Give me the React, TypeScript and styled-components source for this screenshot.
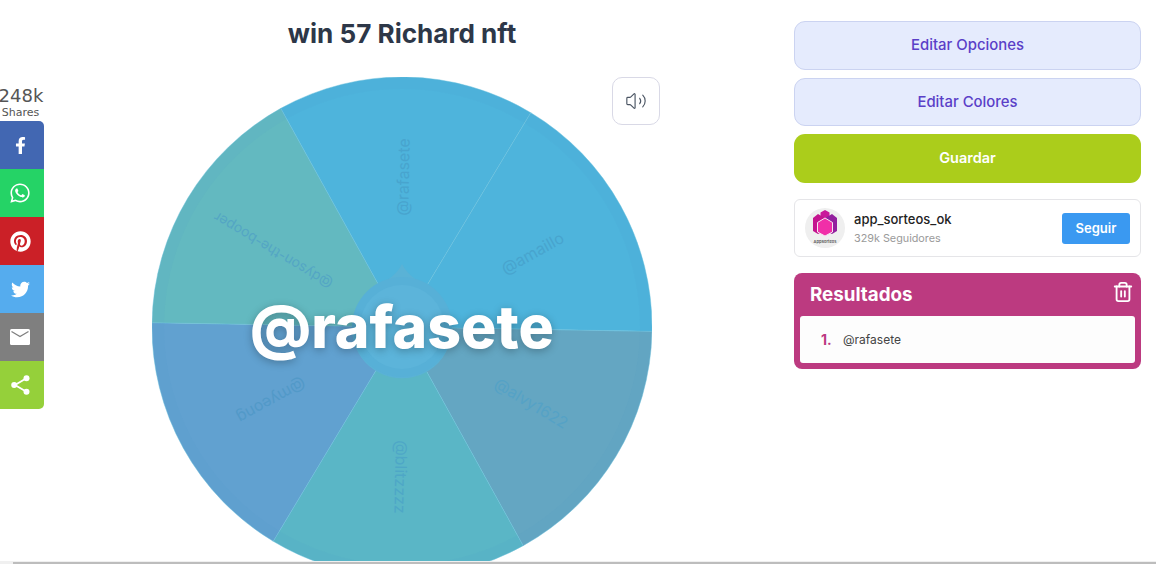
import React from "react";
import styled, { createGlobalStyle } from "styled-components";
import { FaFacebookF, FaWhatsapp, FaPinterest, FaTwitter } from "react-icons/fa";
import { Volume2, Trash2 } from "lucide-react";

const Global = createGlobalStyle`
  html, body { margin: 0; padding: 0; height: 100%; overflow: hidden; background: #fff; }
  body { font-family: Inter, "Liberation Sans", sans-serif; }
`;

const Page = styled.div`
  display: flex;
  align-items: flex-start;
  width: 1156px;
  height: 564px;
  overflow: hidden;
`;
const Main = styled.main`
  width: 780px;
  margin-left: 12px;
  display: flex;
  flex-direction: column;
  align-items: center;
`;
const Title = styled.h1`
  margin: 18px 0 0;
  height: 59px;
  font-size: 26.1px;
  line-height: 32px;
  font-weight: 700;
  color: #2d3748;
`;
const WheelBox = styled.div`
  position: relative;
  width: 500px;
  height: 500px;
  flex: none;
`;
const WheelSvg = styled.svg`
  display: block;
`;
const SoundButton = styled.button`
  position: absolute;
  top: 0;
  left: 460px;
  width: 48px;
  height: 48px;
  display: flex;
  align-items: center;
  justify-content: center;
  padding: 0;
  background: #fff;
  border: 1px solid #d9d9e6;
  border-radius: 10px;
  color: #4b5563;
`;
const Winner = styled.div`
  position: absolute;
  top: 214px;
  left: 0;
  width: 500px;
  text-align: center;
  font-size: 59px;
  line-height: 72px;
  font-weight: 800;
  color: #fff;
  text-shadow: 0 2px 8px rgba(0, 0, 0, 0.28);
`;
const Aside = styled.aside`
  width: 347px;
  margin-left: 2px;
  padding-top: 21px;
  display: flex;
  flex-direction: column;
`;
const OptionButton = styled.button<{ $h: number; $lift: number }>`
  height: ${(p) => p.$h}px;
  margin-bottom: 8px;
  padding: 0 0 ${(p) => p.$lift}px;
  background: #e5ebfd;
  border: 1px solid #cbd3f1;
  border-radius: 11px;
  color: #5a3fc8;
  font: 500 14.9px Inter, sans-serif;
`;
const SaveButton = styled.button`
  height: 49px;
  padding: 0 0 2px;
  background: #abcd1b;
  border: 0;
  border-radius: 11px;
  color: #fff;
  font: 600 14.5px Inter, sans-serif;
`;
const FollowCard = styled.div`
  margin-top: 16px;
  height: 58px;
  box-sizing: border-box;
  display: flex;
  align-items: center;
  padding: 0 10px;
  border: 1px solid #e5e5e8;
  border-radius: 6px;
`;
const Avatar = styled.div`
  position: relative;
  width: 40px;
  height: 40px;
  border-radius: 50%;
  background: #efefef;
  display: flex;
  flex-direction: column;
  align-items: center;
  flex: none;
`;
const AvatarLabel = styled.span`
  position: absolute;
  bottom: 4px;
  font-size: 4px;
  line-height: 5px;
  font-weight: 600;
  color: #555;
  white-space: nowrap;
`;
const FollowText = styled.div`
  margin-left: 9px;
  padding-top: 2px;
  flex: 1;
`;
const FollowName = styled.div`
  font-size: 13px;
  line-height: 18px;
  font-weight: 500;
  color: #222;
`;
const FollowCount = styled.div`
  font-size: 10.8px;
  line-height: 18px;
  color: #9a9a9a;
  margin-top: 2px;
`;
const FollowButton = styled.button`
  width: 68px;
  height: 31px;
  background: #3a99f1;
  border: 0;
  border-radius: 3px;
  color: #fff;
  font: 600 13px Inter, sans-serif;
`;
const Results = styled.section`
  position: relative;
  margin-top: 16px;
  height: 96px;
  box-sizing: border-box;
  padding: 6px;
  background: #bc3a80;
  border-radius: 8px;
  display: flex;
  flex-direction: column;
`;
const ResultsHead = styled.div`
  height: 37px;
  padding: 0 0 6px 10px;
  box-sizing: border-box;
  display: flex;
  align-items: center;
  justify-content: space-between;
  color: #fff;
`;
const ResultsTitle = styled.h2`
  margin: 0;
  font-size: 18.8px;
  font-weight: 700;
`;
const TrashSlot = styled.span`
  display: flex;
  margin: -5px 1px 0 0;
`;
const ResultsBody = styled.div`
  height: 47px;
  display: flex;
  align-items: center;
  padding-left: 21px;
  background: #fdfdfd;
  border-radius: 3px;
`;
const ResultNum = styled.span`
  width: 22px;
  font-size: 14px;
  font-weight: 700;
  color: #bc3a80;
`;
const ResultName = styled.span`
  font-size: 12px;
  color: #444;
`;
const ShareBar = styled.div`
  position: absolute;
  top: 86px;
  left: 0;
  width: 44px;
`;
const ShareCount = styled.div`
  margin-left: -4px;
  width: 50px;
  text-align: center;
  font: 18px/20px "DejaVu Sans", sans-serif;
  color: #555;
`;
const ShareLabel = styled.div`
  width: 41px;
  text-align: center;
  font: 11px/13px "DejaVu Sans", sans-serif;
  color: #555;
  margin-bottom: 2px;
`;
const ShareList = styled.div`
  border-radius: 0 5px 5px 0;
  overflow: hidden;
`;
const ShareItem = styled.div<{ $bg: string }>`
  height: 48px;
  display: flex;
  align-items: center;
  justify-content: center;
  background: ${(p) => p.$bg};
  color: #fff;
  padding-right: 4px;
`;
const ScrollTrack = styled.div`
  position: fixed;
  left: 0;
  right: 0;
  bottom: 0;
  height: 3px;
  background: #f0f0f0;
  padding-left: 13px;
  display: flex;
  align-items: flex-end;
`;
const ScrollThumb = styled.div`
  flex: 1;
  height: 2px;
  background: #bdbdbd;
`;

const C = 250;
const R = 250;
const pt = (deg: number, r: number) => {
  const a = (deg * Math.PI) / 180;
  return `${C + r * Math.cos(a)} ${C + r * Math.sin(a)}`;
};
const segments = [
  { from: 1, fill: "#64a6c2", label: "@alvy1622", ink: "#55a2c6", size: 16 },
  { from: 61, fill: "#5ab6c6", label: "@blitzzzz", ink: "#4ea7c6", size: 16 },
  { from: 121, fill: "#61a1d0", label: "@myeong", ink: "#5299c8", size: 16 },
  { from: 181, fill: "#63b9c0", label: "@dyson-the-booper", ink: "#54a6c4", size: 14 },
  { from: 241, fill: "#4eb4dc", label: "@rafasete", ink: "#48a4ce", size: 16 },
  { from: 301, fill: "#4eb4dc", label: "@amaillo", ink: "#48a4ce", size: 16 },
];

const Wheel = () => (
  <WheelSvg width="500" height="500" viewBox="0 0 500 500">
    {segments.map((s) => (
      <path
        key={s.from}
        d={`M${C} ${C} L${pt(s.from, R)} A${R} ${R} 0 0 1 ${pt(s.from + 60, R)} Z`}
        fill={s.fill}
        stroke="#6cc3de"
        strokeOpacity="0.45"
        strokeWidth="1"
      />
    ))}
    <circle cx={C} cy={C} r={R - 6} fill="none" stroke="#4a9fc8" strokeOpacity="0.08" strokeWidth="12" />
    {segments.map((s) => (
      <text
        key={s.label}
        transform={`rotate(${s.from + 30} ${C} ${C}) translate(400 250)`}
        textAnchor="middle"
        dominantBaseline="middle"
        fontFamily="Inter, sans-serif"
        fontSize={s.size}
        fill={s.ink}
      >
        {s.label}
      </text>
    ))}
    <path d="M250 187 Q254 196 266 204 A50 50 0 1 1 234 204 Q246 196 250 187 Z" fill="#5ab2d6" />
    <circle cx={C} cy={C} r="50" fill="#57b0d7" />
    <circle cx={C} cy={C} r="42" fill="#5cb4da" />
  </WheelSvg>
);

const AppLogo = () => (
  <svg width="30" height="30" viewBox="0 0 30 30" style={{ marginTop: 1 }}>
    <path d="M15 1l4.5 2.5v4.5L15 10.5 10.500 8V3.500z" fill="#c9189a" />
    <path d="M8 5l6 3.500V22l-6 3-5-3V9z" fill="#c4148f" />
    <path d="M22 5l-6 3.500V22l6 3 5-3V9z" fill="#93209f" />
    <path d="M15 9l7.500 4.500V23L15 27l-7.500-4V13.500z" fill="#f02fa8" stroke="#f6e6f2" strokeWidth="1" />
  </svg>
);

const MailIcon = () => (
  <svg width="20" height="16" viewBox="0 0 20 16">
    <rect width="20" height="16" rx="1.5" fill="#fff" />
    <path d="M1.500 2.500l8.500 5 8.500-5" fill="none" stroke="#808080" strokeWidth="1.300" />
  </svg>
);

const ShareIcon = () => (
  <svg width="19" height="20" viewBox="0 0 19 20">
    <path d="M15 3.500L4 10l11 6.500" fill="none" stroke="#fff" strokeWidth="1.800" />
    <circle cx="15.500" cy="3.200" r="3" fill="#fff" />
    <circle cx="3.200" cy="10" r="3" fill="#fff" />
    <circle cx="15.500" cy="16.800" r="3" fill="#fff" />
  </svg>
);

export default function App() {
  return (
    <>
      <Global />
      <Page>
        <ShareBar>
          <ShareCount>248k</ShareCount>
          <ShareLabel>Shares</ShareLabel>
          <ShareList>
            <ShareItem $bg="#4267b2"><FaFacebookF size={17} /></ShareItem>
            <ShareItem $bg="#25d366"><FaWhatsapp size={22} /></ShareItem>
            <ShareItem $bg="#cb2027"><FaPinterest size={21} /></ShareItem>
            <ShareItem $bg="#55acee"><FaTwitter size={19} /></ShareItem>
            <ShareItem $bg="#7f7f7f"><MailIcon /></ShareItem>
            <ShareItem $bg="#95d03a"><ShareIcon /></ShareItem>
          </ShareList>
        </ShareBar>
        <Main>
          <Title>win 57 Richard nft</Title>
          <WheelBox>
            <Wheel />
            <SoundButton aria-label="Sonido"><Volume2 size={22} strokeWidth={1.25} /></SoundButton>
            <Winner>@rafasete</Winner>
          </WheelBox>
        </Main>
        <Aside>
          <OptionButton $h={49} $lift={2}>Editar Opciones</OptionButton>
          <OptionButton $h={48} $lift={0}>Editar Colores</OptionButton>
          <SaveButton>Guardar</SaveButton>
          <FollowCard>
            <Avatar>
              <AppLogo />
              <AvatarLabel>AppSorteos</AvatarLabel>
            </Avatar>
            <FollowText>
              <FollowName>app_sorteos_ok</FollowName>
              <FollowCount>329k Seguidores</FollowCount>
            </FollowText>
            <FollowButton>Seguir</FollowButton>
          </FollowCard>
          <Results>
            <ResultsHead>
              <ResultsTitle>Resultados</ResultsTitle>
              <TrashSlot><Trash2 size={22} strokeWidth={2} /></TrashSlot>
            </ResultsHead>
            <ResultsBody>
              <ResultNum>1.</ResultNum>
              <ResultName>@rafasete</ResultName>
            </ResultsBody>
          </Results>
        </Aside>
      </Page>
      <ScrollTrack><ScrollThumb /></ScrollTrack>
    </>
  );
}
